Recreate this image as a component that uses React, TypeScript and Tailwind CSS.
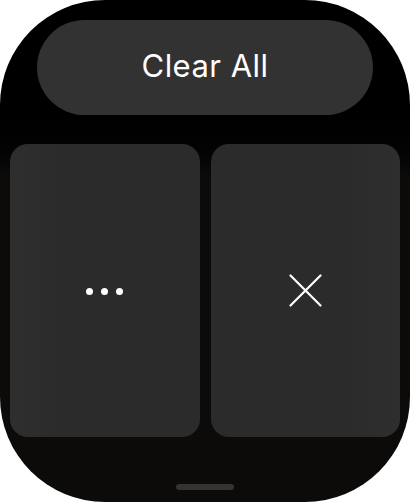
import React from 'react';

const App: React.FC = () => {
  return (
    <div className="w-[410px] h-[502px] bg-white" style={{ fontFamily: 'Inter, "Noto Sans", sans-serif' }}>
      <div className="w-full h-full rounded-[105px] overflow-hidden bg-gradient-to-b from-black from-[20%] to-[#0c0b0a] to-[35%] flex flex-col items-center">
        {/* Clear All */}
        <button className="mt-[20px] w-[336px] h-[95px] rounded-full bg-[#323232] flex items-center justify-center text-white text-[31px] tracking-[0.015em] pb-[2px]">
          Clear All
        </button>

        {/* Cards */}
        <div className="mt-[29px] w-full px-[10px] flex gap-[11px]">
          <div className="flex-1 h-[293px] rounded-[18px] bg-gradient-to-r from-[#2f2e2f] from-0% to-[#2c2b2c] to-[25%] flex items-center justify-center">
            <div className="flex items-center gap-[8px] mt-[1px]">
              <span className="w-[7px] h-[7px] rounded-full bg-white" />
              <span className="w-[7px] h-[7px] rounded-full bg-white" />
              <span className="w-[7px] h-[7px] rounded-full bg-white" />
            </div>
          </div>
          <div className="flex-1 h-[293px] rounded-[18px] bg-gradient-to-l from-[#2f2e2f] from-0% to-[#2c2b2c] to-[25%] flex items-center justify-center">
            <svg width="33" height="33" viewBox="0 0 33 33" className="mt-[-1px]">
              <path d="M1.5 1.5 L31.5 31.5 M31.5 1.5 L1.5 31.5" stroke="white" strokeWidth="2.2" strokeLinecap="round" fill="none" />
            </svg>
          </div>
        </div>

        {/* Home indicator */}
        <div className="mt-[47px] w-[58px] h-[6px] rounded-full bg-[#333333]" />
      </div>
    </div>
  );
};

export default App;
